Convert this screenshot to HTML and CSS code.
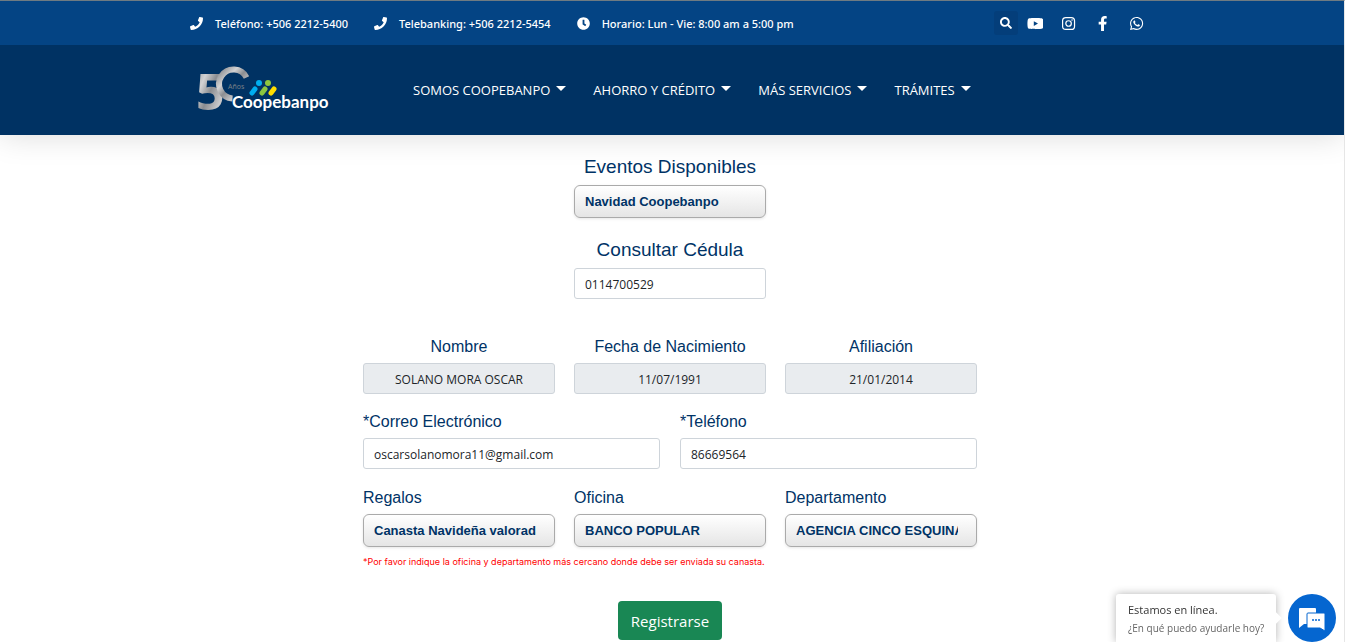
FILE: index.html
```
<!DOCTYPE html>
<html lang="es">
<head>
    <meta charset="UTF-8">
    <meta name="viewport" content="width=device-width, initial-scale=1.0">
    <title>Coopebanpo - Eventos</title>
    <link rel="stylesheet" href="styles.css">
</head>
<body>

    <header class="site-header">
        <div class="top-bar">
            <div class="container">
                <ul class="contact-list">
                    <li>
                        <svg viewBox="0 0 512 512" aria-hidden="true"><path d="M493.4 24.6l-104-24c-11.3-2.6-22.9 3.3-27.5 13.9l-48 112c-4.2 9.8-1.4 21.3 6.9 28l60.6 49.6c-36 76.7-98.9 140.5-177.2 177.2l-49.6-60.6c-6.8-8.3-18.2-11.1-28-6.9l-112 48C3.9 366.5-2 378.1.6 389.4l24 104C27.1 504.2 36.7 512 48 512c256.1 0 464-207.5 464-464 0-11.2-7.7-20.9-18.6-23.4z"/></svg>
                        <a href="tel:+50622125400">Teléfono: +506 2212-5400</a>
                    </li>
                    <li>
                        <svg viewBox="0 0 512 512" aria-hidden="true"><path d="M493.4 24.6l-104-24c-11.3-2.6-22.9 3.3-27.5 13.9l-48 112c-4.2 9.8-1.4 21.3 6.9 28l60.6 49.6c-36 76.7-98.9 140.5-177.2 177.2l-49.6-60.6c-6.8-8.3-18.2-11.1-28-6.9l-112 48C3.9 366.5-2 378.1.6 389.4l24 104C27.1 504.2 36.7 512 48 512c256.1 0 464-207.5 464-464 0-11.2-7.7-20.9-18.6-23.4z"/></svg>
                        <a href="tel:+50622125454">Telebanking: +506 2212-5454</a>
                    </li>
                    <li>
                        <svg viewBox="0 0 512 512" aria-hidden="true"><path d="M256 8C119 8 8 119 8 256s111 248 248 248 248-111 248-248S393 8 256 8zm57.1 350.1L224.9 294c-3.1-2.3-4.9-5.9-4.9-9.7V116c0-6.6 5.4-12 12-12h48c6.6 0 12 5.4 12 12v137.7l63.5 46.2c5.4 3.9 6.5 11.4 2.6 16.8l-28.2 38.8c-3.9 5.3-11.4 6.5-16.8 2.6z"/></svg>
                        <span>Horario: Lun - Vie: 8:00 am a 5:00 pm</span>
                    </li>
                </ul>
                <div class="social">
                    <button type="button" class="search-btn" aria-label="Buscar">
                        <svg viewBox="0 0 512 512"><path d="M505 442.7L405.3 343c-4.5-4.5-10.6-7-17-7H372c27.6-35.3 44-79.7 44-128C416 93.1 322.9 0 208 0S0 93.1 0 208s93.1 208 208 208c48.3 0 92.7-16.4 128-44v16.3c0 6.4 2.5 12.5 7 17l99.7 99.7c9.4 9.4 24.6 9.4 33.9 0l28.3-28.3c9.4-9.4 9.4-24.6.1-34zM208 336c-70.7 0-128-57.2-128-128 0-70.7 57.2-128 128-128 70.7 0 128 57.2 128 128 0 70.7-57.2 128-128 128z"/></svg>
                    </button>
                    <a href="#youtube" aria-label="YouTube">
                        <svg viewBox="0 0 576 512"><path d="M549.655 124.083c-6.281-23.65-24.787-42.276-48.284-48.597C458.781 64 288 64 288 64S117.22 64 74.629 75.486c-23.497 6.322-42.003 24.947-48.284 48.597-11.412 42.867-11.412 132.305-11.412 132.305s0 89.438 11.412 132.305c6.281 23.65 24.787 41.5 48.284 47.821C117.22 448 288 448 288 448s170.78 0 213.371-11.486c23.497-6.321 42.003-24.171 48.284-47.821 11.412-42.867 11.412-132.305 11.412-132.305s0-89.438-11.412-132.305zm-317.51 213.508V175.185l142.739 81.205-142.739 81.201z"/></svg>
                    </a>
                    <a href="#instagram" aria-label="Instagram">
                        <svg viewBox="0 0 448 512"><rect x="20" y="52" width="408" height="408" rx="112" fill="none" stroke="#fff" stroke-width="42"/><circle cx="224" cy="256" r="94" fill="none" stroke="#fff" stroke-width="42"/><circle cx="343" cy="137" r="27"/></svg>
                    </a>
                    <a href="#facebook" aria-label="Facebook">
                        <svg viewBox="0 0 320 512"><path d="M279.14 288l14.22-92.66h-88.91v-60.13c0-25.35 12.42-50.06 52.24-50.06h40.42V6.26S260.43 0 225.36 0c-73.22 0-121.08 44.38-121.08 124.72v70.62H22.89V288h81.39v224h100.17V288z"/></svg>
                    </a>
                    <a href="#whatsapp" aria-label="WhatsApp">
                        <svg viewBox="0 0 448 512"><path d="M380.9 97.1C339 55.1 283.2 32 223.9 32c-122.4 0-222 99.6-222 222 0 39.1 10.2 77.3 29.6 111L0 480l117.7-30.9c32.4 17.7 68.9 27 106.1 27h.1c122.3 0 224.1-99.6 224.1-222 0-59.3-25.2-115-67.1-157zm-157 341.6c-33.2 0-65.7-8.9-94-25.7l-6.7-4-69.8 18.3L72 359.2l-4.4-7c-18.5-29.4-28.2-63.3-28.2-98.2 0-101.7 82.8-184.5 184.6-184.5 49.3 0 95.6 19.2 130.4 54.1 34.8 34.9 56.2 81.2 56.1 130.5 0 101.8-84.9 184.6-186.6 184.6zm101.2-138.2c-5.5-2.8-32.8-16.2-37.9-18-5.1-1.9-8.8-2.8-12.5 2.8-3.7 5.6-14.3 18-17.6 21.8-3.2 3.7-6.5 4.2-12 1.4-32.6-16.3-54-29.1-75.5-66-5.7-9.8 5.7-9.1 16.3-30.3 1.8-3.7.9-6.9-.5-9.7-1.4-2.8-12.5-30.1-17.1-41.2-4.5-10.8-9.1-9.3-12.5-9.5-3.2-.2-6.9-.2-10.6-.2-3.7 0-9.7 1.4-14.8 6.9-5.1 5.6-19.4 19-19.4 46.3 0 27.3 19.9 53.7 22.6 57.4 2.8 3.7 39.1 59.7 94.8 83.8 35.2 15.2 49 16.5 66.6 13.9 10.7-1.6 32.8-13.4 37.4-26.4 4.6-13 4.6-24.1 3.2-26.4-1.3-2.5-5-3.9-10.5-6.6z"/></svg>
                    </a>
                </div>
            </div>
        </div>

        <div class="main-bar">
            <div class="container">
                <a href="#inicio" class="logo" aria-label="Coopebanpo 50 años">
                    <svg viewBox="0 0 136 50">
                        <defs>
                            <linearGradient id="silver" x1="0" y1="0" x2="1" y2="1">
                                <stop offset="0" stop-color="#85888c"/>
                                <stop offset="0.3" stop-color="#d2d2d3"/>
                                <stop offset="0.5" stop-color="#8b8d91"/>
                                <stop offset="0.75" stop-color="#c9c9cb"/>
                                <stop offset="1" stop-color="#77797d"/>
                            </linearGradient>
                        </defs>
                        <text x="-1" y="45" class="logo-five" fill="url(#silver)">5</text>
                        <path d="M35.500 33.500A14.500 14.500 0 1 1 49.500 12.500" fill="none" stroke="url(#silver)" stroke-width="6"/>
                        <text x="31" y="24" class="logo-years">Años</text>
                        <g stroke-width="5" stroke-linecap="round">
                            <path d="M55 28l3-4" stroke="#00aeef"/>
                            <path d="M65 28l3-4" stroke="#8cc63f"/>
                            <path d="M74 28l3-4" stroke="#ffde00"/>
                        </g>
                        <circle cx="62" cy="18" r="3" fill="#00aeef"/>
                        <circle cx="71" cy="18" r="3" fill="#8cc63f"/>
                        <text x="35" y="43" class="logo-name">Coopebanpo</text>
                    </svg>
                </a>
                <nav>
                    <ul class="menu">
                        <li><a href="#somos">SOMOS COOPEBANPO</a></li>
                        <li><a href="#ahorro">AHORRO Y CRÉDITO</a></li>
                        <li><a href="#servicios">MÁS SERVICIOS</a></li>
                        <li><a href="#tramites">TRÁMITES</a></li>
                    </ul>
                </nav>
            </div>
        </div>
    </header>

    <main>
        <form class="event-form">
            <div class="lookup">
                <label class="title" for="evento">Eventos Disponibles</label>
                <select id="evento">
                    <option>Navidad Coopebanpo</option>
                </select>
            </div>
            <div class="lookup">
                <label class="title" for="cedula">Consultar Cédula</label>
                <input type="text" id="cedula" value="0114700529">
            </div>

            <div class="row three person">
                <div class="field">
                    <label for="nombre">Nombre</label>
                    <input type="text" id="nombre" value="SOLANO MORA OSCAR" readonly>
                </div>
                <div class="field">
                    <label for="nacimiento">Fecha de Nacimiento</label>
                    <input type="text" id="nacimiento" value="11/07/1991" readonly>
                </div>
                <div class="field">
                    <label for="afiliacion">Afiliación</label>
                    <input type="text" id="afiliacion" value="21/01/2014" readonly>
                </div>
            </div>

            <div class="row two">
                <div class="field">
                    <label for="correo">*Correo Electrónico</label>
                    <input type="email" id="correo" value="oscarsolanomora11@gmail.com">
                </div>
                <div class="field">
                    <label for="telefono">*Teléfono</label>
                    <input type="tel" id="telefono" value="86669564">
                </div>
            </div>

            <div class="row three">
                <div class="field">
                    <label for="regalos">Regalos</label>
                    <select id="regalos">
                        <option>Canasta Navideña valorada</option>
                    </select>
                </div>
                <div class="field">
                    <label for="oficina">Oficina</label>
                    <select id="oficina">
                        <option>BANCO POPULAR</option>
                    </select>
                </div>
                <div class="field">
                    <label for="departamento">Departamento</label>
                    <select id="departamento">
                        <option>AGENCIA CINCO ESQUINAS</option>
                    </select>
                </div>
            </div>
            <p class="note">*Por favor indique la oficina y departamento más cercano donde debe ser enviada su canasta.</p>

            <button type="submit" class="submit-btn">Registrarse</button>
        </form>
    </main>

    <!-- chat -->
    <div class="chat">
        <div class="chat-bubble">
            <p class="chat-status">Estamos en línea.</p>
            <p class="chat-text">¿En qué puedo ayudarle hoy?</p>
        </div>
        <button type="button" class="chat-btn" aria-label="Abrir chat">
            <svg viewBox="0 0 48 48">
                <path d="M12 14h15a1 1 0 0 1 1 1v15H16l-5 4V15a1 1 0 0 1 1-1z"/>
                <path d="M20 19h16a1 1 0 0 1 1 1v17l-5-3H20a1 1 0 0 1-1-1V20a1 1 0 0 1 1-1z" stroke="#0566d0" stroke-width="1"/>
                <g fill="#0566d0"><circle cx="25" cy="26" r="1"/><circle cx="28" cy="26" r="1"/><circle cx="31" cy="26" r="1"/></g>
            </svg>
        </button>
    </div>

</body>
</html>
```
FILE: styles.css
```
* {
    box-sizing: border-box;
}

body {
    margin: 0;
    min-height: 100vh;
    border-top: 1px solid #6f7b82;
    border-right: 1px solid #e6e6e6;
    background-color: #fff;
    color: #003366;
    font-family: "Liberation Sans", Arial, sans-serif;
    font-size: 16px;
}

ul {
    list-style: none;
    margin: 0;
    padding: 0;
}

.container {
    display: flex;
    align-items: center;
    max-width: 964px;
    height: 100%;
    margin: 0 auto;
}

/* header */
.site-header {
    font-family: "Open Sans", "Noto Sans", sans-serif;
    color: #fff;
    box-shadow: 0 0 30px rgba(0, 0, 0, 0.15);
}

.site-header a {
    color: #fff;
    text-decoration: none;
}

.site-header svg {
    display: block;
    fill: #fff;
}

.top-bar {
    height: 44px;
    background-color: #044484;
    font-family: "Noto Sans", "Open Sans", sans-serif;
    font-size: 11px;
    font-weight: 500;
}

.top-bar .container {
    justify-content: space-between;
}

.contact-list {
    display: flex;
    gap: 26px;
}

.contact-list li {
    display: flex;
    align-items: center;
    gap: 12px;
}

.contact-list svg {
    width: 13px;
    height: 13px;
}

.social {
    display: flex;
    align-items: center;
}

.social a {
    display: flex;
    justify-content: center;
    width: 34px;
}

.social svg {
    height: 15px;
}

.search-btn {
    display: flex;
    align-items: center;
    justify-content: center;
    width: 24px;
    height: 24px;
    padding: 0;
    border: 0;
    border-radius: 3px;
    background-color: #043e7a;
}

.search-btn svg {
    height: 12px;
}

.main-bar {
    height: 90px;
    background-color: #003263;
}

.logo {
    width: 136px;
    margin: 0 80px 0 7px;
}

.logo svg {
    overflow: visible;
}

.logo-five {
    font: bold 50px "Open Sans", sans-serif;
}

.logo-years {
    font: 7px "Open Sans", sans-serif;
    fill: #7d8288;
}

.logo-name {
    font: bold 17px Lato, sans-serif;
}

.menu {
    display: flex;
    gap: 27px;
    font-size: 13px;
}

.menu a {
    display: flex;
    align-items: center;
    gap: 6px;
}

.menu a::after {
    content: "";
    margin-bottom: 3px;
    border: 5px solid transparent;
    border-top-color: #fff;
    border-bottom: 0;
}

/* form */
main {
    padding: 20px 4px 0 0;
}

.event-form {
    display: flex;
    flex-direction: column;
    max-width: 614px;
    margin: 0 auto;
}

.lookup {
    display: flex;
    flex-direction: column;
    align-items: center;
    width: 192px;
    margin: 0 auto 20px;
}

label {
    line-height: 24px;
}

.title {
    margin-bottom: 6px;
    font-size: 19px;
    white-space: nowrap;
}

.row {
    display: grid;
    margin-bottom: 16px;
}

.three {
    grid-template-columns: repeat(3, 1fr);
    gap: 19px;
}

.two {
    grid-template-columns: repeat(2, 1fr);
    gap: 20px;
    margin-bottom: 17px;
}

.person {
    margin-top: 16px;
    text-align: center;
}

.field {
    display: flex;
    flex-direction: column;
    gap: 4px;
}

input {
    width: 100%;
    height: 31px;
    padding: 2px 10px 0;
    border: 1px solid #ced4da;
    border-radius: 3px;
    background-color: #fff;
    color: #212529;
    font-family: "Open Sans", "Noto Sans", sans-serif;
    font-size: 12px;
}

input[readonly] {
    background-color: #e9ecef;
    text-align: center;
}

select {
    width: 100%;
    height: 33px;
    padding: 0 18px 0 10px;
    border: 1px solid #aaa;
    border-radius: 6px;
    appearance: none;
    background: linear-gradient(#fff, #e5e5e5);
    box-shadow: 0 1px 3px rgba(0, 0, 0, 0.1);
    color: #003366;
    font-family: "Liberation Sans", Arial, sans-serif;
    font-size: 13px;
    font-weight: bold;
}

.row:last-of-type {
    margin-bottom: 8px;
}

.note {
    margin: 0 0 32px;
    color: #f00;
    font-family: Inter, "Liberation Sans", sans-serif;
    font-size: 9px;
    line-height: 14px;
}

.submit-btn {
    align-self: center;
    height: 39px;
    padding: 0 13px;
    border: 0;
    border-radius: 4px;
    background-color: #198754;
    color: #fff;
    font-family: "Open Sans", "Noto Sans", sans-serif;
    font-size: 15px;
}

/* chat */
.chat {
    position: fixed;
    right: 9px;
    bottom: 0;
    display: flex;
    gap: 12px;
    font-family: "Open Sans", "Noto Sans", sans-serif;
}

.chat-bubble {
    position: relative;
    width: 160px;
    height: 48px;
    padding: 7px 12px;
    border-radius: 3px 3px 0 0;
    background-color: #fff;
    box-shadow: 0 0 8px rgba(0, 0, 0, 0.3);
    white-space: nowrap;
}

/* arrow that points to the chat button */
.chat-bubble::after {
    content: "";
    position: absolute;
    top: 20px;
    right: -4px;
    width: 8px;
    height: 8px;
    background-color: #fff;
    transform: rotate(45deg);
}

.chat-bubble p {
    margin: 0;
}

.chat-status {
    color: #333;
    font-size: 11px;
    line-height: 18px;
}

.chat-text {
    color: #666;
    font-size: 10px;
    line-height: 18px;
}

.chat-btn {
    width: 48px;
    height: 48px;
    padding: 0;
    border: 0;
    border-radius: 50%;
    background-color: #0566d0;
}

.chat-btn svg {
    display: block;
    fill: #fff;
}
```
